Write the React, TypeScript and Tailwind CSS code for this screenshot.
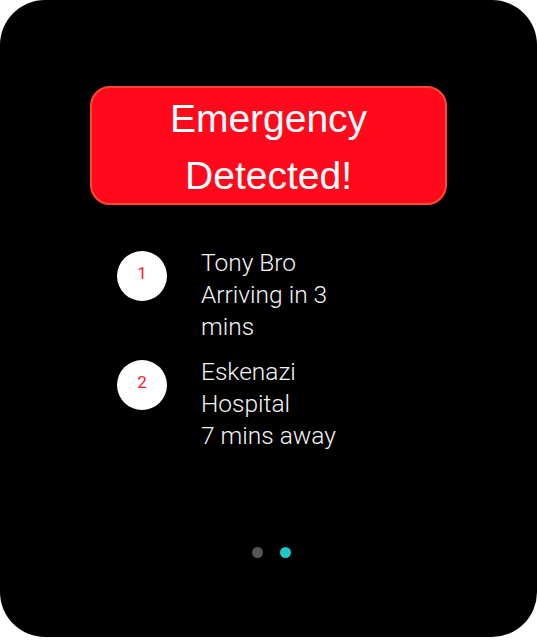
import React from 'react';

const stops = [
  { n: 1, lines: ['Tony Bro', 'Arriving in 3', 'mins'] },
  { n: 2, lines: ['Eskenazi', 'Hospital', '7 mins away'] },
];

export default function App() {
  return (
    <div className="w-[537px] h-[640px] bg-white">
      <div className="w-[537px] h-[637px] bg-black rounded-[45px] flex flex-col items-center pt-[86px]">
        {/* Alert banner */}
        <div
          className="w-[357px] h-[119px] bg-[#ff0a1c] border-2 border-[#ff4a2a] rounded-[20px] flex flex-col items-center justify-center text-white text-[39px] leading-[57px] pt-[2px]"
          style={{ fontFamily: '"Liberation Sans", Arial, sans-serif' }}
        >
          <span>Emergency</span>
          <span>Detected!</span>
        </div>

        {/* Responders */}
        <div
          className="w-[537px] flex flex-col gap-[13px] pl-[117px] mt-[42px]"
          style={{ fontFamily: 'Roboto, sans-serif' }}
        >
          {stops.map((s) => (
            <div key={s.n} className="flex items-start gap-[34px]">
              <div className="w-[50px] h-[50px] mt-[4px] rounded-full bg-white flex items-center justify-center text-[#ff1a1a] text-[17px] leading-none pb-[6px]">
                {s.n}
              </div>
              <div className="text-[#f4f4f4] text-[24.5px] font-light leading-[32px]">
                {s.lines.map((l) => (
                  <div key={l}>{l}</div>
                ))}
              </div>
            </div>
          ))}
        </div>

        <div className="flex-1" />

        {/* Pager dots */}
        <div className="flex items-center gap-[17px] mb-[79px] ml-[5px]">
          <div className="w-[11px] h-[11px] rounded-full bg-[#555555]" />
          <div className="w-[11px] h-[11px] rounded-full bg-[#1ec8c8]" />
        </div>
      </div>
    </div>
  );
}
